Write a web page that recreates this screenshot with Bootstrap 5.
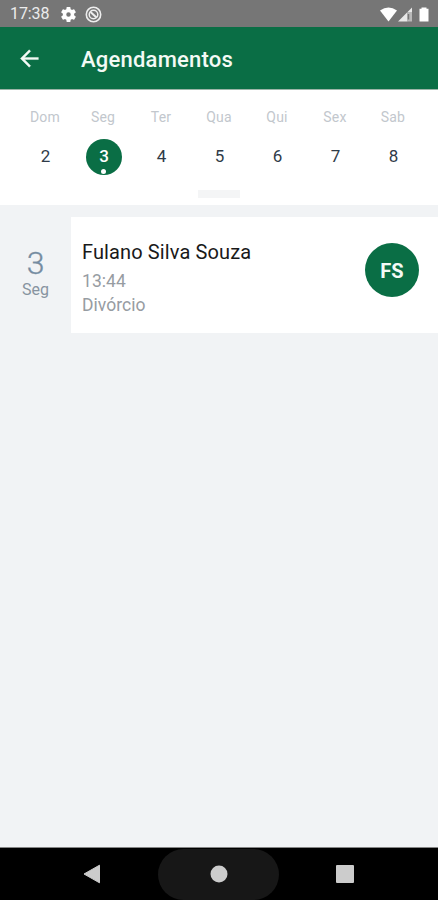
<!DOCTYPE html>
<html lang="pt-BR">
<head>
<meta charset="utf-8">
<meta name="viewport" content="width=device-width, initial-scale=1">
<title>Agendamentos</title>
<link href="https://cdn.jsdelivr.net/npm/bootstrap@5.3.0/dist/css/bootstrap.min.css" rel="stylesheet">
<style>
:root { --brand: #0a6e45; }
body { font-family: Roboto, "Noto Sans", sans-serif; background: #f1f3f5; height: 900px; overflow: hidden; line-height: 1; }
svg { display: block; flex: none; }
.status-bar { height: 27px; background: #767676; color: #ececec; font-size: 16px; padding: 1px 8px 0 10px; }
.status-time { width: 39px; margin-right: 12px; letter-spacing: -.1px; }
.status-gap { margin-right: 9px; }
.app-bar { height: 63px; background: var(--brand); border-bottom: 1px solid #9cb5a8; padding: 1px 17px 0; }
.app-title { font-size: 22px; font-weight: 500; letter-spacing: .22px; margin-left: 39px; padding-top: 3px; color: #f3faf5; }
.week { height: 115px; padding: 19px 16px 0; }
.day { width: 58px; flex: none; }
.day-label { font-size: 14px; line-height: 16px; color: #c2c7cd; letter-spacing: .2px; }
.day-number { width: 36px; height: 36px; margin-top: 14px; font-size: 17px; color: #2f3b48; padding: 0 0 1px 1px; }
.day-number.active-day { background: var(--brand); color: #fff; font-weight: 500; margin-left: 1px; }
.day-dot { width: 5px; height: 5px; bottom: 1px; left: 15.5px; }
.handle { width: 42px; height: 8px; margin-top: 15px; background: #f4f5f6; }
.agenda { padding-top: 12px; }
.agenda-date { width: 71px; color: #758ca1; padding-top: 30px; }
.agenda-num { font-size: 32px; line-height: 33px; font-weight: 300; -webkit-text-stroke: .3px #758ca1; }
.agenda-week { font-size: 16px; line-height: 19px; color: #8793a0; }
.appointment { height: 116px; padding: 23px 19px 0 11px; }
.client { font-size: 20px; line-height: 25px; color: #191919; letter-spacing: .12px; }
.detail { font-size: 17.5px; line-height: 24px; color: #979ca2; letter-spacing: .05px; }
.time-row { margin-top: 4px; }
.initials { width: 54px; height: 54px; background: var(--brand); color: #f3faf5; font-size: 20px; font-weight: 700; margin-top: 3px; padding-top: 1px; }
.nav-keys { height: 53px; background: #000; border-top: 1px solid #858585; padding: 0 84px 0 83px; }
.home-pill { width: 121px; height: 51px; border-radius: 26px; background: #171717; }
.nav-keys svg { margin-bottom: 1px; }
</style>
</head>
<body class="d-flex flex-column">
<div class="status-bar d-flex align-items-center">
  <span class="status-time">17:38</span>
  <svg class="status-gap" width="15" height="15" viewBox="2 2 20 20"><path fill="#fff" d="M19.430 12.980c.04-.32.07-.64.07-.98s-.03-.66-.07-.98l2.110-1.650c.19-.15.24-.42.12-.64l-2-3.460c-.12-.22-.39-.3-.61-.22l-2.490 1c-.52-.4-1.080-.73-1.690-.98l-.38-2.650A.49.49 0 0 0 14 2h-4c-.25 0-.46.18-.49.42l-.38 2.650c-.61.25-1.170.59-1.690.98l-2.490-1c-.23-.09-.49 0-.61.22l-2 3.460c-.13.22-.07.49.12.64l2.110 1.650c-.04.32-.07.65-.07.98s.03.66.07.98l-2.110 1.650c-.19.15-.24.42-.12.64l2 3.460c.12.22.39.3.61.22l2.490-1c.52.4 1.080.73 1.690.98l.38 2.650c.03.24.24.42.49.42h4c.25 0 .46-.18.49-.42l.38-2.650c.61-.25 1.170-.59 1.690-.98l2.490 1c.23.09.49 0 .61-.22l2-3.460c.12-.22.07-.49-.12-.64zM12 15a3 3 0 1 1 0-6 3 3 0 0 1 0 6z"/></svg>
  <svg width="17" height="17" viewBox="0 0 17 17" fill="none" stroke="#eee"><circle cx="8.500" cy="8.500" r="7.200" stroke-width="1.600"/><circle cx="8.500" cy="8.500" r="4.300" stroke-width="1.500"/><path d="M5.500 6l6 5.500" stroke-width="2"/></svg>
  <svg class="ms-auto" width="50" height="17" viewBox="0 0 50 17"><path fill="#fff" d="M0 4.500Q8.500 -1.500 17 4.500L8.500 15.500z"/><path fill="#e8e8e8" d="M18 15.500L32 1.500V6H27.500V15.500z"/><path fill="#b9b9b9" d="M27.500 6H32v9.500h-4.500z"/><path stroke="#777" stroke-width="1.500" d="M28.500 8v5.500"/><path fill="#fff" d="M41.500 1.500h5v1.300h2V15.500h-9V2.800h2z"/></svg>
</div>
<header class="app-bar d-flex align-items-center">
  <svg width="25" height="25" viewBox="0 0 24 24"><path fill="#f3faf5" stroke="#f3faf5" stroke-width=".4" d="M20.500 11H7.200l5.900-5.900L11.700 3.600 3.300 12l8.400 8.400 1.400-1.500L7.200 13h13.300z"/></svg>
  <h1 class="app-title mb-0">Agendamentos</h1>
</header>
<section class="week bg-white">
  <div class="d-flex text-center">
    <div class="day d-flex flex-column align-items-center"><span class="day-label">Dom</span><span class="day-number d-flex align-items-center justify-content-center">2</span></div>
    <div class="day d-flex flex-column align-items-center"><span class="day-label">Seg</span><span class="day-number active-day rounded-circle position-relative d-flex align-items-center justify-content-center">3<i class="day-dot position-absolute rounded-circle bg-white"></i></span></div>
    <div class="day d-flex flex-column align-items-center"><span class="day-label">Ter</span><span class="day-number d-flex align-items-center justify-content-center">4</span></div>
    <div class="day d-flex flex-column align-items-center"><span class="day-label">Qua</span><span class="day-number d-flex align-items-center justify-content-center">5</span></div>
    <div class="day d-flex flex-column align-items-center"><span class="day-label">Qui</span><span class="day-number d-flex align-items-center justify-content-center">6</span></div>
    <div class="day d-flex flex-column align-items-center"><span class="day-label">Sex</span><span class="day-number d-flex align-items-center justify-content-center">7</span></div>
    <div class="day d-flex flex-column align-items-center"><span class="day-label">Sab</span><span class="day-number d-flex align-items-center justify-content-center">8</span></div>
  </div>
  <div class="handle mx-auto"></div>
</section>
<main class="agenda d-flex flex-grow-1 align-items-start">
  <div class="agenda-date text-center">
    <div class="agenda-num">3</div>
    <div class="agenda-week">Seg</div>
  </div>
  <article class="appointment bg-white flex-grow-1 d-flex justify-content-between align-items-start">
    <div>
      <div class="client">Fulano Silva Souza</div>
      <div class="detail time-row">13:44</div>
      <div class="detail">Divórcio</div>
    </div>
    <div class="initials rounded-circle d-flex align-items-center justify-content-center">FS</div>
  </article>
</main>
<nav class="nav-keys d-flex align-items-center justify-content-between">
  <svg width="18" height="20" viewBox="0 0 18 20"><path fill="#ccc" d="M1 10L16.500 1.200V18.800z" stroke="#ccc" stroke-linejoin="round"/></svg>
  <div class="home-pill d-flex align-items-center justify-content-center"><svg width="18" height="18" viewBox="0 0 18 18"><circle cx="9" cy="9" r="8.500" fill="#ccc"/></svg></div>
  <svg width="18" height="18" viewBox="0 0 18 18"><rect width="18" height="18" rx="1" fill="#ccc"/></svg>
</nav>
<script src="https://cdn.jsdelivr.net/npm/bootstrap@5.3.0/dist/js/bootstrap.bundle.min.js"></script>
</body>
</html>
